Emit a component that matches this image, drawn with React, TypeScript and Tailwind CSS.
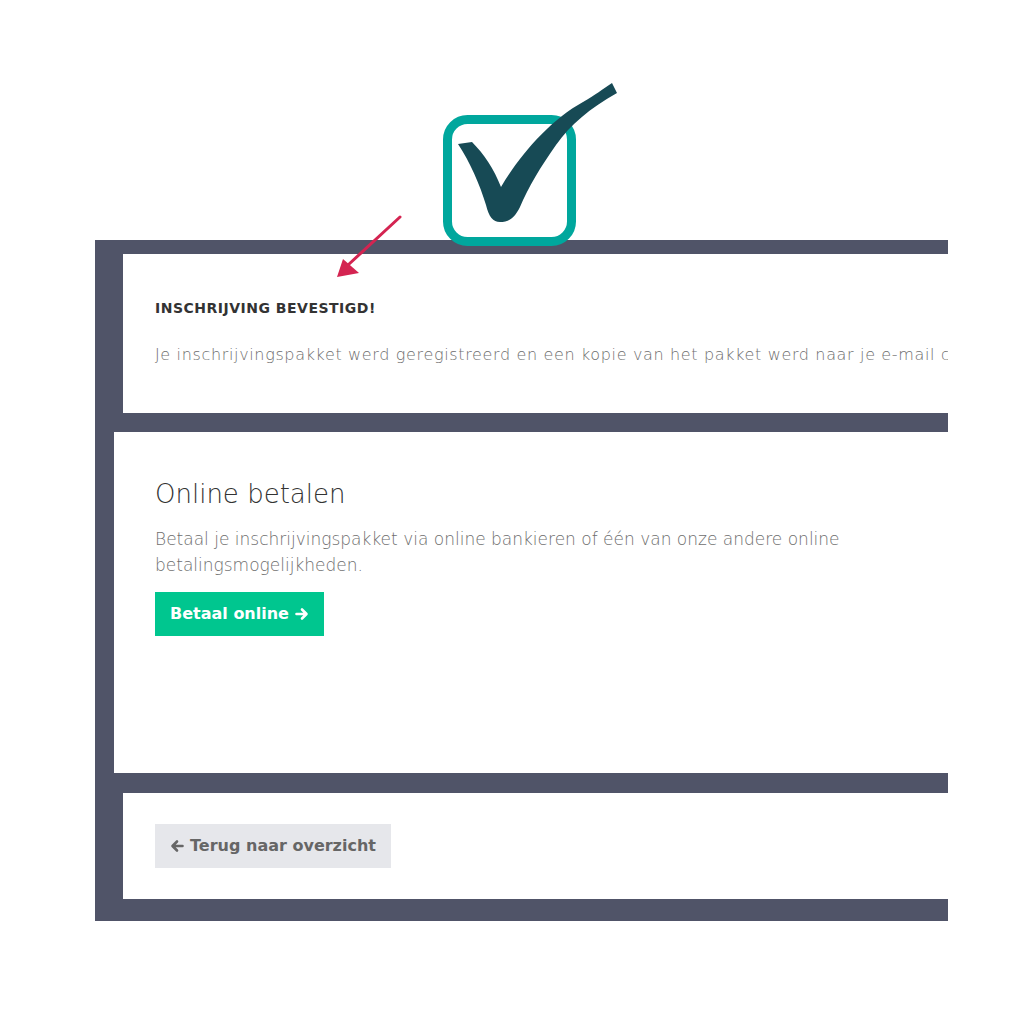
import React from 'react';

const font = { fontFamily: '"DejaVu Sans", "Liberation Sans", sans-serif' };

const CheckBadge: React.FC = () => (
  <svg className="absolute left-[440px] top-[78px]" width="184" height="172" viewBox="440 78 184 172">
    <rect x="447.5" y="119.5" width="124" height="122" rx="20" fill="none" stroke="#00a79d" strokeWidth="9" />
    <path
      d="M458,144 L472,142 C484,154 494,169 501,187 C520,155 550,120 583,102 C595,95 603,89 612,83 L617,93 C590,108 570,125 556,145 C541,166 528,188 520,207 C514,219 508,222 500,222 C493,222 489,217 486,205 C480,185 470,162 458,144 Z"
      fill="#174a55"
    />
  </svg>
);

const PointerArrow: React.FC = () => (
  <svg className="absolute left-[330px] top-[210px]" width="80" height="75" viewBox="330 210 80 75">
    <line x1="400" y1="217" x2="348" y2="265" stroke="#d42451" strokeWidth="3" strokeLinecap="round" />
    <polygon points="337,277 343,259 359,273" fill="#d42451" />
  </svg>
);

const App: React.FC = () => {
  return (
    <div className="relative w-[1024px] h-[1024px] bg-white overflow-hidden" style={font}>
      <div className="pt-[240px] pl-[95px]">
        <div className="w-[853px] h-[681px] bg-[#505468] overflow-hidden pt-[14px] flex flex-col">
          {/* confirmation */}
          <div className="ml-[28px] w-[900px] h-[159px] bg-white pl-[32px] pt-[44px] whitespace-nowrap">
            <h3 className="text-[14px] font-semibold text-[#333] tracking-[0.5px] leading-[20px]">INSCHRIJVING BEVESTIGD!</h3>
            <p className="mt-[25px] text-[16px] font-light text-[#6e6e6e] tracking-[0.65px] leading-[24px]">
              Je inschrijvingspakket werd geregistreerd en een kopie van het pakket werd naar je e-mail c
            </p>
          </div>
          {/* online betalen */}
          <div className="mt-[19px] ml-[19px] w-[900px] h-[341px] bg-white pl-[41px] pt-[47px]">
            <h2 className="text-[26px] font-light text-[#333] leading-[30px]">Online betalen</h2>
            <p className="mt-[17px] w-[720px] text-[17px] font-light text-[#6e6e6e] leading-[26px]">
              Betaal je inschrijvingspakket via online bankieren of één van onze andere online betalingsmogelijkheden.
            </p>
            <button className="mt-[14px] h-[44px] w-[169px] bg-[#00c68f] text-white text-[16px] font-semibold flex items-center justify-center gap-[6px]">
              Betaal online
              <svg width="14" height="14" viewBox="0 0 14 14">
                <path d="M1.5 7h9M7 2.5 11.5 7 7 11.5" fill="none" stroke="white" strokeWidth="2.6" strokeLinecap="round" strokeLinejoin="round" />
              </svg>
            </button>
          </div>
          {/* terug */}
          <div className="mt-[20px] ml-[28px] w-[900px] h-[106px] bg-white pl-[32px] pt-[31px]">
            <button className="h-[44px] w-[236px] bg-[#e6e7eb] text-[#666] text-[16px] font-semibold flex items-center justify-center gap-[6px]">
              <svg width="14" height="14" viewBox="0 0 14 14">
                <path d="M12.5 7h-9M7 2.5 2.5 7 7 11.5" fill="none" stroke="#666" strokeWidth="2.6" strokeLinecap="round" strokeLinejoin="round" />
              </svg>
              Terug naar overzicht
            </button>
          </div>
        </div>
      </div>
      <CheckBadge />
      <PointerArrow />
    </div>
  );
};

export default App;
